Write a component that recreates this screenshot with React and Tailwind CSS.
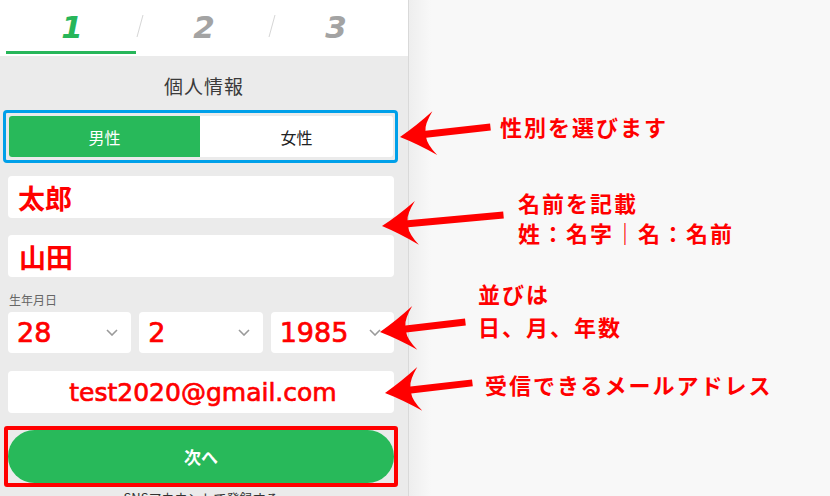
import React from "react";

const jp = { fontFamily: '"Noto Sans CJK JP", "Noto Sans", sans-serif' };
const num = { fontFamily: '"DejaVu Sans", "Liberation Sans", sans-serif' };

const Chevron = () => (
	<svg width="12" height="7" viewBox="0 0 12 7" fill="none">
		<path d="M1 1l5 5 5-5" stroke="#9a9a9a" strokeWidth="1.6" />
	</svg>
);

const Slash = () => (
	<svg className="absolute left-[-2px] top-[14px]" width="8" height="24" viewBox="0 0 8 24">
		<line x1="7" y1="1" x2="1" y2="23" stroke="#d6d6d6" strokeWidth="1" />
	</svg>
);

// arrow drawn pointing left from its tip, shaft running to the right
const Arrow = ({ x, y, len, angle }) => (
	<path
		transform={`translate(${x} ${y}) rotate(${angle})`}
		d={`M0 0 Q17 -9 35 -22 Q26 -10 26 -3.5 L${len} -3.5 L${len} 3.5 L26 3.5 Q26 10 35 22 Q17 9 0 0 Z`}
		fill="#ff0000"
	/>
);

const Step = ({ n, active }) => (
	<span
		className={`text-[31px] font-bold italic ${active ? "text-[#27b65a]" : "text-[#a3a3a3]"}`}
		style={num}
	>
		{n}
	</span>
);

const Select = ({ value }) => (
	<div className="flex-1 h-[41px] bg-white rounded-[4px] flex items-center justify-between pl-[9px] pr-[13px]">
		<span className="text-[27px] text-[#ff0000] leading-none [-webkit-text-stroke:0.7px_#ff0000]" style={num}>
			{value}
		</span>
		<Chevron />
	</div>
);

const Note = ({ className, children }) => (
	<div
		className={`absolute text-[22px] font-bold tracking-[2px] text-[#ff0000] whitespace-nowrap ${className}`}
		style={jp}
	>
		{children}
	</div>
);

const App = () => {
	return (
		<div className="relative w-[830px] h-[496px] overflow-hidden flex" style={jp}>
			{/* form panel */}
			<div className="w-[409px] h-full flex flex-col border-r border-[#d9d9d9] bg-[#ebebeb]">
				<div className="h-[56px] bg-white px-[6px] grid grid-cols-3 shrink-0">
					<div className="flex flex-col">
						<div className="flex-1 flex items-center justify-center pt-[3px]">
							<Step n="1" active />
						</div>
						<div className="h-[3px] w-[130px] bg-[#27b65a] mb-[2px]"></div>
					</div>
					<div className="relative flex items-center justify-center pb-[2px]">
						<Slash />
						<Step n="2" />
					</div>
					<div className="relative flex items-center justify-center pb-[2px]">
						<Slash />
						<Step n="3" />
					</div>
				</div>

				<div className="flex flex-col pl-[8px] pr-[14px]">
					<div className="text-center text-[19px] leading-[24px] text-[#3a3a3a] mt-[18px] ml-[6px] tracking-[1px]">個人情報</div>

					<div className="mt-[12px] ml-[-5px] w-[395px] border-[3px] border-[#00a0e9] rounded-[4px] py-[3px] pl-[3px] pr-[2px]">
						<div className="flex h-[41px] bg-white rounded-[3px] overflow-hidden">
							<div className="w-[191px] bg-[#28b95a] text-white flex items-center justify-center text-[16px]">男性</div>
							<div className="flex-1 flex items-center justify-center text-[16px] text-[#222]">女性</div>
						</div>
					</div>

					<div className="mt-[13px] h-[42px] bg-white rounded-[4px] flex items-center pl-[10px]">
						<span className="text-[27px] font-bold text-[#ff0000] leading-none">太郎</span>
					</div>
					<div className="mt-[17px] h-[42px] bg-white rounded-[4px] flex items-center pl-[11px]">
						<span className="text-[27px] font-bold text-[#ff0000] leading-none">山田</span>
					</div>

					<div className="mt-[15px] text-[12px] leading-[16px] text-[#666] ml-[1px]">生年月日</div>
					<div className="mt-[4px] flex gap-[8px]">
						<Select value="28" />
						<Select value="2" />
						<Select value="1985" />
					</div>

					<div className="mt-[18px] h-[42px] bg-white rounded-[4px] flex items-center justify-center pl-[4px]">
						<span className="text-[25px] text-[#ff0000] leading-none [-webkit-text-stroke:0.7px_#ff0000]" style={num}>
							test2020@gmail.com
						</span>
					</div>

					<div className="mt-[13px] ml-[-4px] w-[394px] border-[4px] border-[#ff0000] rounded-[3px]">
						<button className="w-full h-[53px] rounded-full bg-[#28b95a] text-white text-[17px] font-bold flex items-center justify-center">
							次へ
						</button>
					</div>

					<div className="mt-[2px] text-center text-[13px] leading-[18px] text-[#333]">SNSアカウントで登録する</div>
				</div>
			</div>

			{/* right backdrop */}
			<div className="flex-1 h-full bg-[linear-gradient(to_right,#eeeeee,#f8f8f8_22px)]"></div>

			{/* annotations */}
			<svg className="absolute inset-0 pointer-events-none" width="830" height="496" viewBox="0 0 830 496">
				<Arrow x={400} y={137} len={91} angle={-6.3} />
				<Arrow x={382} y={226} len={122} angle={-5.2} />
				<Arrow x={380} y={332} len={86} angle={-6.7} />
				<Arrow x={385} y={393} len={88} angle={-6.6} />
			</svg>
			<Note className="left-[500px] top-[111px] leading-[30px]">性別を選びます</Note>
			<Note className="left-[518px] top-[187px] leading-[30px]">
				名前を記載
				<br />
				姓：名字｜名：名前
			</Note>
			<Note className="left-[478px] top-[277px] leading-[33px]">
				並びは
				<br />
				日、月、年数
			</Note>
			<Note className="left-[485px] top-[369px] leading-[30px]">受信できるメールアドレス</Note>
		</div>
	);
};

export default App;
